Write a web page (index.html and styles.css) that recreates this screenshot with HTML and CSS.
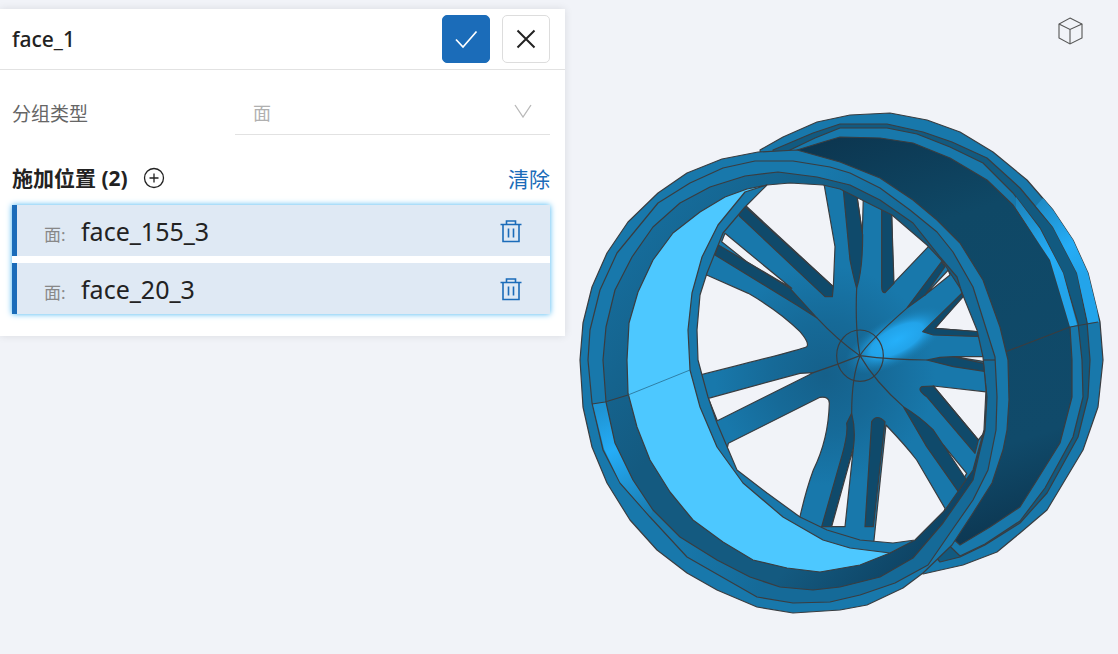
FILE: index.html
```html
<!DOCTYPE html>
<html lang="zh">
<head>
<meta charset="utf-8">
<title>face_1</title>
<link rel="stylesheet" href="styles.css">
</head>
<body>
<svg class="canvas" width="1118" height="654" viewBox="0 0 1118 654" aria-label="wheel">
  <defs>
    <linearGradient id="hiBack" gradientUnits="userSpaceOnUse" x1="1020" y1="185" x2="1075" y2="280">
      <stop offset="0" stop-color="#1a7cb0"/><stop offset=".7" stop-color="#25adf7"/><stop offset="1" stop-color="#23a4ea"/>
    </linearGradient>
    <linearGradient id="hiFront" gradientUnits="userSpaceOnUse" x1="598" y1="410" x2="650" y2="520">
      <stop offset="0" stop-color="#1f94d3"/><stop offset=".35" stop-color="#25adf7"/><stop offset="1" stop-color="#1878ab"/>
    </linearGradient>
    <linearGradient id="barrel" gradientUnits="userSpaceOnUse" x1="850" y1="130" x2="1000" y2="570">
      <stop offset="0" stop-color="#0c3650"/><stop offset=".25" stop-color="#0f4866"/><stop offset=".75" stop-color="#104a6a"/><stop offset="1" stop-color="#0b3049"/>
    </linearGradient>
    <linearGradient id="band" gradientUnits="userSpaceOnUse" x1="620" y1="250" x2="960" y2="530">
      <stop offset="0" stop-color="#166d9c"/><stop offset=".35" stop-color="#145a80"/><stop offset=".75" stop-color="#145a80"/><stop offset="1" stop-color="#0d4060"/>
    </linearGradient>
    <linearGradient id="ringA" gradientUnits="userSpaceOnUse" x1="620" y1="300" x2="990" y2="450">
      <stop offset="0" stop-color="#1878ab"/><stop offset=".35" stop-color="#1878ab"/><stop offset=".6" stop-color="#156a98"/><stop offset="1" stop-color="#156a98"/>
    </linearGradient>
    <radialGradient id="hub" gradientUnits="userSpaceOnUse" cx="825" cy="375" r="110">
      <stop offset="0" stop-color="#15608a"/><stop offset=".5" stop-color="#166a98"/><stop offset="1" stop-color="#1878ab"/>
    </radialGradient>
    <radialGradient id="glow" cx=".5" cy=".5" r=".5">
      <stop offset="0" stop-color="#25b0fa"/><stop offset=".5" stop-color="#22a3e9"/><stop offset="1" stop-color="#1878ab" stop-opacity="0"/>
    </radialGradient>
    <clipPath id="open">
      <polygon points="697,330 700,295 707,273 723,233 745,207 767,185 790,183 823,185 840,189 892,215 927,245 943,262 960,288 977,330 983,357 986,390 984,430 973,470 945,510 915,540 893,543 860,540 827,530 800,517 767,493 737,470 717,423 708,397 702,375 698,360"/>
    </clipPath>
  </defs>

  <g class="edge">
    <polygon class="blue" points="760,150 783,137 817,122 850,115 890,113 927,120 960,132 993,152 1027,180 1053,210 1073,240 1088,273 1097,310 1100,322 1103,360 1098,407 1083,450 1047,510 1020,533 997,552 963,565 923,574 800,400"/>
    <polygon class="deep" points="773,150 813,133 840,124 887,124 923,132 952,142 987,158 1020,188 1040,212 1053,227 1077,273 1087,322 1090,360 1088,397 1078,437 1047,493 1020,523 985,545 960,557 940,562 800,400"/>
    <polygon class="blue" points="790,150 815,138 840,128 887,128 917,134 950,147 983,163 1013,193 1040,228 1063,273 1078,323 1082,360 1083,397 1073,437 1045,488 1020,521 985,544 960,556 800,400"/>
    <polygon class="barrel" points="797,150 823,142 840,137 880,138 913,143 950,158 987,180 1013,205 1040,245 1050,260 1070,327 1072,360 1072,397 1060,443 1037,480 1020,507 990,527 960,545 800,400"/>
    <polygon class="hi-back plain" points="1043,198 1053,210 1073,240 1088,273 1097,310 1099,322 1088,323 1077,273 1053,227 1036,206"/>
    <polygon class="hi-back plain" points="1016,197 1040,229 1063,273 1077,325 1070,327 1050,260 1040,245 1016,208"/>
    <polyline class="line" points="1005,352 1070,327 1098,322"/>

    <polygon class="blue" points="580,360 583,323 592,287 607,253 628,222 658,193 687,173 722,159 758,152 797,150 840,162 880,178 913,200 937,220 960,243 983,280 1000,327 1008,360 1009,400 1007,430 1003,450 992,483 973,513 952,545 923,573 903,588 867,605 840,610 793,613 757,607 717,590 687,573 657,550 630,520 607,483 592,447 583,407"/>
    <polygon class="ring-a" points="588,360 590,330 600,290 617,253 658,203 690,183 723,168 755,161 793,161 830,167 850,173 880,188 910,210 937,232 953,252 973,287 995,357 997,397 996,430 992,450 988,470 973,500 950,533 928,565 895,583 860,595 830,602 793,603 757,597 687,557 650,517 620,483 603,450 592,403"/>
    <polygon class="hi-front plain" points="593,404 606,402 615,443 633,480 653,510 650,516 620,482 604,449"/>
    <polygon class="band" points="603,360 606,327 615,290 632,257 653,227 680,203 710,187 745,176 778,172 817,177 850,185 880,200 913,223 940,257 957,277 983,360 987,397 985,430 980,450 973,480 943,523 913,558 880,577 860,582 840,587 813,590 780,587 750,577 717,560 680,537 653,510 633,480 615,443 606,402"/>
    <polygon class="light" points="767,185 747,189 725,197 700,212 673,233 653,260 638,292 629,323 627,360 628,393 637,427 650,460 670,492 693,520 723,542 753,560 787,568 820,572 860,565 890,553 917,538 860,360"/>
    <polygon class="blue" points="767,185 745,192 718,225 702,257 692,293 688,330 690,370 700,407 717,447 743,483 783,517 823,540 850,548 890,553 915,540 860,360"/>
    <polyline class="line" points="592,404 605,402 628,395"/>
    <line class="hair" x1="628" y1="395" x2="690" y2="370"/>
    <line class="line" x1="983" y1="360" x2="995" y2="360"/>

    <g clip-path="url(#open)">
      <rect class="hub" x="690" y="180" width="300" height="370"/>
      <ellipse class="glow" cx="0" cy="0" rx="58" ry="24" transform="translate(897 340) rotate(-28)"/>
      <g class="spokes" transform="translate(700 180) scale(.33333)">
        <polygon class="hole" points="205,0 135,75 400,320 405,200 370,0"/>
        <polygon class="wall" points="115,85 135,80 400,320 397,350 375,350 118,108"/>
        <polygon class="hole" points="65,185 75,160 275,325 140,245"/>
        <polygon class="wall" points="55,195 140,245 270,325 350,413 290,375 45,225"/>
        <path class="hole" d="M20,285 L145,340 Q240,395 300,455 Q330,490 320,500 Q300,510 -20,590 L-40,300Z"/>
        <polygon class="hole" points="25,655 300,580 340,578 52,722"/>
        <path class="hole" d="M85,790 L360,652 Q388,648 388,670 Q385,780 340,870 Q318,930 300,1010 L200,1100 L60,900Z"/>
        <path class="wall" d="M455,700 Q468,750 460,805 L395,1040 L365,1040 L425,830 Q445,760 440,730Z"/>
        <polygon class="hole" points="460,805 395,1040 435,1040"/>
        <path class="hole" d="M558,735 Q620,800 650,840 L735,985 L700,1100 L520,1100Z"/>
        <path class="wall" d="M515,725 Q530,700 555,725 L520,1040 L495,1040Z"/>
        <polygon class="hole" points="730,795 800,880 790,897"/>
        <path class="wall" d="M610,680 Q660,710 700,750 L800,900 L775,935 L680,800Z"/>
        <polygon class="hole" points="700,618 900,640 900,700 835,780"/>
        <path class="wall" d="M680,650 Q650,630 665,620 L700,618 L835,780 L825,820Z"/>
        <polygon class="hole" points="760,530 900,530 900,552"/>
        <path class="wall" d="M680,540 Q720,530 760,530 L860,552 L860,575 L760,560Z"/>
        <polygon class="hole" points="705,445 785,350 900,350 900,460"/>
        <path class="wall" d="M668,455 L785,340 L790,350 L705,445 L850,456 L850,470 L700,465Z"/>
        <polygon class="hole" points="675,345 745,270 750,285"/>
        <polygon class="wall" points="620,385 725,245 735,260 675,345"/>
        <polygon class="hole" points="575,100 720,170 685,200 580,310"/>
        <path class="wall" d="M545,70 L575,105 L582,310 L555,338 Q545,338 545,320Z"/>
        <polygon class="hole" points="470,40 490,50 487,160"/>
        <path class="wall" d="M430,30 L470,45 L488,165 Q488,270 470,325 Q460,290 450,240Z"/>
        <ellipse class="line" cx="480" cy="527" rx="70" ry="77"/>
        <path class="line" d="M480,527 Q465,450 470,325 M480,527 Q500,490 620,385 M480,527 Q580,540 680,540 M480,527 Q525,605 610,680 M480,527 Q455,590 455,700 M480,527 Q410,555 340,578 M480,527 Q415,483 350,413"/>
      </g>
    </g>
    <polygon class="line" points="697,330 700,295 707,273 723,233 745,207 767,185 790,183 823,185 840,189 892,215 927,245 943,262 960,288 977,330 983,357 986,390 984,430 973,470 945,510 915,540 893,543 860,540 827,530 800,517 767,493 737,470 717,423 708,397 702,375 698,360"/>
  </g>

  <g class="cube">
    <path d="M1070 18 L1082 24 V38 L1070 44 L1059 38 V24Z"/>
    <path d="M1059 24 L1070 29.500 L1082 24 M1070 29.500 V44"/>
  </g>
</svg>

<main class="panel">
  <header class="head">
    <h1 class="title">face_1</h1>
    <button class="btn primary" aria-label="ok">
      <svg width="24" height="24" viewBox="0 0 24 24"><path d="M2 12.500 L9 20 L22.500 4.500"/></svg>
    </button>
    <button class="btn" aria-label="close">
      <svg width="24" height="24" viewBox="0 0 24 24"><path d="M3.500 3.500 L20.500 20.500 M20.500 3.500 L3.500 20.500"/></svg>
    </button>
  </header>

  <div class="field">
    <span class="field-label">分组类型</span>
    <div class="select">
      <span>面</span>
      <svg width="18" height="14" viewBox="0 0 18 14"><path d="M1 1 L9 13 L17 1"/></svg>
    </div>
  </div>

  <div class="section">
    <strong class="section-title">施加位置 (2)</strong>
    <svg class="plus" width="22" height="22" viewBox="0 0 22 22"><circle cx="11" cy="11" r="9.500"/><path d="M6.500 11 H15.500 M11 6.500 V15.500"/></svg>
    <a class="clear">清除</a>
  </div>

  <ul class="list">
    <li class="item">
      <span class="kind">面:</span><span class="name">face_155_3</span>
      <svg class="trash" width="24" height="24" viewBox="0 0 24 24"><path d="M1.500 5.500 H22.500 M7.500 5.500 V2 H16.500 V5.500 M4 5.500 V22.500 H20 V5.500 M9.500 9.500 V18.500 M14.500 9.500 V18.500"/></svg>
    </li>
    <li class="item">
      <span class="kind">面:</span><span class="name">face_20_3</span>
      <svg class="trash" width="24" height="24" viewBox="0 0 24 24"><path d="M1.500 5.500 H22.500 M7.500 5.500 V2 H16.500 V5.500 M4 5.500 V22.500 H20 V5.500 M9.500 9.500 V18.500 M14.500 9.500 V18.500"/></svg>
    </li>
  </ul>
</main>
</body>
</html>
```

FILE: styles.css
```css
* { box-sizing: border-box; }
html, body { margin: 0; height: 100%; }
body {
  position: relative;
  width: 1118px;
  height: 654px;
  overflow: hidden;
  padding-top: 9px;
  background: #f1f3f8;
  font-family: "Noto Sans", "Noto Sans CJK SC", sans-serif;
  color: #222;
}

/* 3D view */
.canvas { position: absolute; left: 0; top: 0; }
.edge polygon, .edge polyline, .edge ellipse, .edge path, .edge line { stroke: #3a3d40; stroke-width: 1.2; stroke-linejoin: round; }
.blue { fill: #1878ab; }
.ring-a { fill: url(#ringA); }
.deep { fill: #125a80; }
.barrel { fill: url(#barrel); }
.band { fill: url(#band); }
.light { fill: #4dc8ff; }
.hi-back { fill: url(#hiBack); }
.hi-front { fill: url(#hiFront); }
.edge .plain { stroke: none; }
.edge .hub, .edge .glow { stroke: none; }
.hub { fill: url(#hub); }
.glow { fill: url(#glow); }
.line { fill: none; }
.edge .hair { stroke: #23607f; stroke-width: .7; }
.spokes polygon, .spokes path, .spokes ellipse { stroke-width: 3.6; }
.hole { fill: #f1f3f8; }
.wall { fill: #0f4a6b; }
.cube path { fill: none; stroke: #555; stroke-width: 1.1; }

/* Panel */
.panel {
  position: relative;
  width: 565px;
  height: 327px;
  background: #fff;
  box-shadow: 0 0 8px rgba(0, 0, 0, .1);
}
.head {
  display: flex;
  align-items: center;
  gap: 12px;
  height: 61px;
  padding: 0 15px 1px 12px;
  border-bottom: 1px solid #e2e2e2;
}
.title { flex: 1; margin: 0; font-size: 21px; font-weight: 500; color: #222; }
.btn {
  display: flex;
  align-items: center;
  justify-content: center;
  width: 48px;
  height: 48px;
  padding: 0;
  background: #fff;
  border: 1px solid #ddd;
  border-radius: 5px;
}
.btn path { fill: none; stroke: #222; stroke-width: 2; }
.primary { background: #1b6cb9; border-color: #1b6cb9; }
.primary path { stroke: #fff; stroke-width: 1.7; }

.field {
  display: flex;
  align-items: center;
  height: 65px;
  padding: 17px 15px 0 12px;
}
.field-label { width: 223px; margin-top: 3px; font-size: 19px; color: #666; }
.select {
  flex: 1;
  display: flex;
  align-items: center;
  justify-content: space-between;
  height: 48px;
  padding: 0 18px;
  font-size: 18px;
  color: #b0b0b0;
  border-bottom: 1px solid #e2e2e2;
}
.select span { margin-top: 2px; }
.select path { fill: none; stroke: #b8b8b8; stroke-width: 1.3; }

.section {
  display: flex;
  align-items: center;
  height: 44px;
  margin-top: 21px;
  padding: 0 15px 0 12px;
}
.section-title { margin-top: -2px; font-size: 21px; font-weight: 700; color: #222; }
.plus { margin-left: 15px; }
.plus circle, .plus path { fill: none; stroke: #222; stroke-width: 1.3; }
.clear { margin-left: auto; margin-top: -1px; font-size: 21px; color: #1b6cb9; }

.list {
  display: flex;
  flex-direction: column;
  gap: 7px;
  margin: 5px 15px 0 12px;
  padding: 0;
  list-style: none;
  background: #fff;
  box-shadow: 0 0 6px #43b4f2;
}
.item {
  display: flex;
  align-items: center;
  height: 51px;
  padding: 0 27px 0 27px;
  background: #dfe9f4;
  border-left: 5px solid #1b6cb9;
}
.kind { width: 37px; margin-top: 5px; font-size: 17px; color: #888; }
.name { flex: 1; font-size: 25px; color: #222; }
.trash path { fill: none; stroke: #1b6cb9; stroke-width: 1.6; }
```
